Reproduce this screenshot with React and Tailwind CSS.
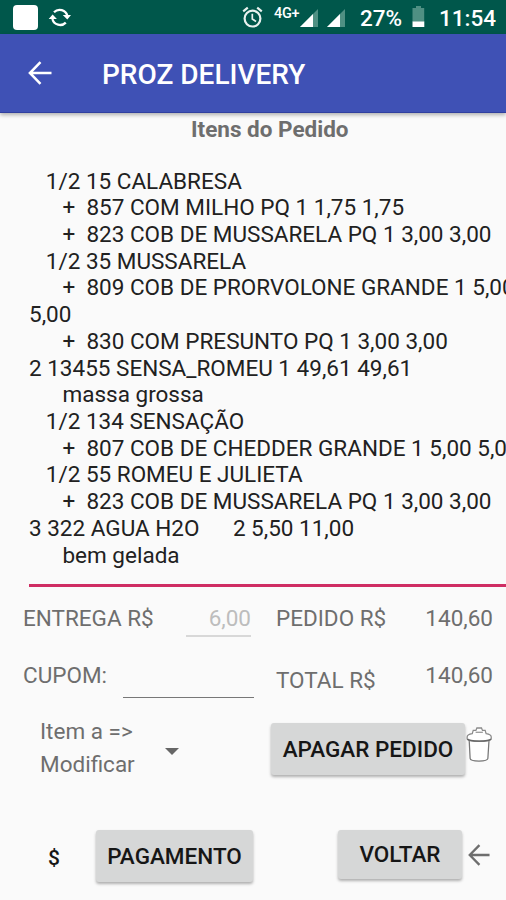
const orderLines = [
  '   1/2 15 CALABRESA',
  '      +  857 COM MILHO PQ 1 1,75 1,75',
  '      +  823 COB DE MUSSARELA PQ 1 3,00 3,00',
  '   1/2 35 MUSSARELA',
  '      +  809 COB DE PRORVOLONE GRANDE 1 5,00',
  '5,00',
  '      +  830 COM PRESUNTO PQ 1 3,00 3,00',
  '2 13455 SENSA_ROMEU 1 49,61 49,61',
  '      massa grossa',
  '   1/2 134 SENSAÇÃO',
  '      +  807 COB DE CHEDDER GRANDE 1 5,00 5,00',
  '   1/2 55 ROMEU E JULIETA',
  '      +  823 COB DE MUSSARELA PQ 1 3,00 3,00',
  '3 322 AGUA H2O      2 5,50 11,00',
  '      bem gelada',
];

function BackArrow({ className }) {
  return (
    <svg className={className} viewBox="0 0 24 24" fill="none" stroke="currentColor" strokeWidth="2.5">
      <path d="M23.5 12H2M12.5 1.2L1.9 12l10.6 10.8" />
    </svg>
  );
}

function SyncIcon() {
  return (
    <svg className="mt-[1px] ml-[10px] h-[22px] w-[24px] shrink-0" viewBox="0 0 24 22" fill="none" stroke="#fff" strokeWidth="2.3">
      <path d="M6 5.2A8 8 0 0 1 19.4 9M17.8 15.6A8 8 0 0 1 4.4 12" />
      <path d="M14.8 8h8.2l-3.7 4.6zM.7 12h8.2L4.6 7.4z" fill="#fff" stroke="none" />
    </svg>
  );
}

function AlarmIcon() {
  return (
    <svg className="h-[22px] w-[21px] shrink-0" viewBox="0 0 21 22" fill="none" stroke="#e8f1ee" strokeWidth="2.2">
      <circle cx="10.5" cy="12.6" r="7.9" />
      <path d="M1.2 5.4l4.6-3.7M19.8 5.4l-4.6-3.7" />
      <path d="M10.3 7.8v5.3l3.8 2.3" strokeWidth="1.7" />
    </svg>
  );
}

function Signal({ className }) {
  return (
    <svg className={className} viewBox="0 0 18 18">
      <path d="M18 0v18H0z" fill="#4f9083" />
      <path d="M13 5v13H0z" fill="#fff" />
    </svg>
  );
}

function Battery() {
  return (
    <svg className="ml-[10px] h-[22px] w-[13px] shrink-0" viewBox="0 0 13 22">
      <path d="M4 0h5v2h3.2v14H.5V2H4z" fill="#4f9083" />
      <path d="M.5 15.5h11.8V21H.5z" fill="#fff" />
    </svg>
  );
}

function TrashIcon() {
  return (
    <svg className="mt-[3px] ml-[1px] h-[38px] w-[26px] shrink-0" viewBox="0 0 27 38" preserveAspectRatio="none" fill="#fff" stroke="#777" strokeWidth="1.3">
      <path d="M3.3 14l1 18.500c.3 3.400 18 3.400 18.400 0L23.900 14" />
      <path d="M1.200 11c0-2 2.300-3 5.300-3.400l1-3.200h2.800l1-2.400h4.800l1 2.400h2.800l1 3.200c3 .4 5.300 1.400 5.300 3.400v2c-1.500 3-23.500 3-25 0z" stroke="#8a8a8a" />
      <path d="M1.500 13c2 2.800 22.500 2.800 24.500 0" fill="none" stroke="#666" />
      <path d="M10 6.300h7.500" fill="none" stroke="#999" />
    </svg>
  );
}

function GrayButton({ className, children }) {
  return (
    <button className={`shrink-0 rounded-[3px] bg-[#d6d7d7] text-center font-medium text-[#161616] shadow-[0_2px_3px_rgba(0,0,0,0.3)] ${className}`}>
      {children}
    </button>
  );
}

export default function App() {
  return (
    <div className="flex h-[900px] w-[506px] flex-col overflow-hidden bg-[#fafafa] font-['Roboto',sans-serif] text-[22.5px] leading-[27px] text-[#6e6e6e]">
      <div className="flex h-[34px] shrink-0 items-center bg-[#00574b] pl-[13px] text-white">
        <div className="h-[25px] w-[25px] shrink-0 rounded-[4px] bg-white" />
        <SyncIcon />
        <div className="ml-[170px] flex items-center">
          <AlarmIcon />
          <span className="mb-[7px] ml-[11px] w-[27px] shrink-0 text-[14.5px] leading-[14px] font-medium tracking-[-0.3px] whitespace-nowrap">4G+</span>
          <Signal className="mt-[2px] -ml-[1px] h-[18px] w-[18px] shrink-0" />
          <Signal className="mt-[2px] ml-[9px] h-[18px] w-[18px] shrink-0" />
          <span className="mt-[2px] ml-[15px] w-[42px] shrink-0 font-medium whitespace-nowrap">27%</span>
          <Battery />
          <span className="mt-[2px] ml-[14px] font-medium whitespace-nowrap">11:54</span>
        </div>
      </div>

      <header className="z-10 flex h-[79px] shrink-0 items-center border-b border-[#303f9f] bg-[#3f51b5] pl-[28px] text-white shadow-[0_2px_4px_rgba(0,0,0,0.3)]">
        <BackArrow className="h-[24px] w-[24px]" />
        <h1 className="mt-[3px] ml-[50px] text-[28px] font-medium whitespace-nowrap">PROZ DELIVERY</h1>
      </header>

      <h2 className="mt-[3px] ml-[191px] h-[27px] shrink-0 font-bold">Itens do Pedido</h2>

      <div className="mt-[24px] ml-[29px] h-[420px] shrink-0 border-b-[3px] border-[#cf2d63] pt-[0.5px] text-[#212121]">
        {orderLines.map((line, i) => (
          <div key={i} className="h-[26.72px] leading-[26.72px] whitespace-pre">{line}</div>
        ))}
      </div>

      <div className="mt-[18px] flex h-[33px] shrink-0 pl-[23px]">
        <span className="w-[163px]">ENTREGA R$</span>
        <span className="h-[32px] w-[65px] border-b-2 border-[#d8d8d8] text-right text-[#bdbdbd]">6,00</span>
        <span className="ml-[25px] w-[117px]">PEDIDO R$</span>
        <span className="w-[100px] text-right">140,60</span>
      </div>

      <div className="mt-[24px] flex h-[36px] shrink-0 pl-[23px]">
        <span className="w-[100px]">CUPOM:</span>
        <span className="h-[36px] w-[131px] border-b-[1.5px] border-[#777]" />
        <span className="mt-[5px] ml-[22px] w-[117px]">TOTAL R$</span>
        <span className="w-[100px] text-right">140,60</span>
      </div>

      <div className="mt-[25px] flex h-[63px] shrink-0 pl-[40px]">
        <div className="-mt-[8px] w-[125px] leading-[33px]">
          <div>Item a =&gt;</div>
          <div>Modificar</div>
        </div>
        <svg className="mt-[25px] h-[7px] w-[14px]" viewBox="0 0 14 7">
          <path d="M0 0h14L7 7z" fill="#666" />
        </svg>
        <GrayButton className="ml-[92px] h-[52px] w-[194px]">APAGAR PEDIDO</GrayButton>
        <TrashIcon />
      </div>

      <div className="mt-[44px] flex h-[60px] shrink-0 pl-[48px]">
        <span className="mt-[15px] w-[48px] text-[21px] font-medium text-[#161616]">$</span>
        <GrayButton className="h-[52px] w-[157px]">PAGAMENTO</GrayButton>
        <GrayButton className="ml-[85px] h-[49px] w-[124px]">VOLTAR</GrayButton>
        <BackArrow className="mt-[14px] ml-[6px] h-[22px] w-[22px]" />
      </div>
    </div>
  );
}
